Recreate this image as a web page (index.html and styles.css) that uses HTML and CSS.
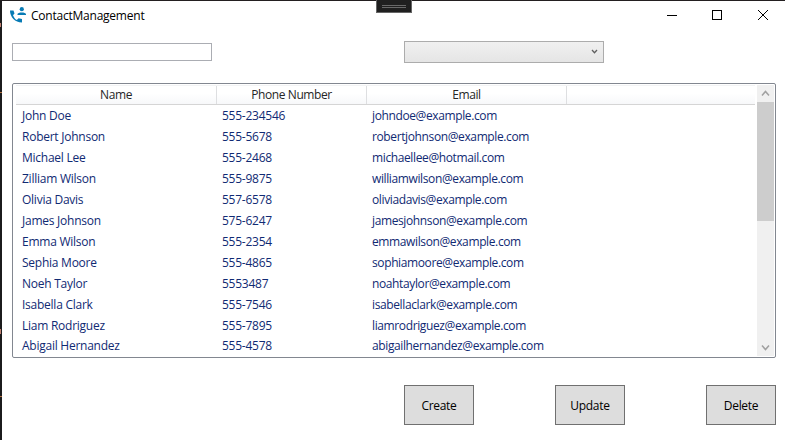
FILE: index.html
```
<!DOCTYPE html>
<html lang="en">
<head>
<meta charset="utf-8">
<title>ContactManagement</title>
<link rel="stylesheet" href="styles.css">
</head>
<body>
<div class="desktop">
<div class="edge"></div>
<main class="window">
  <header class="titlebar">
    <svg class="logo" width="18" height="18" viewBox="0 0 18 18"><path d="M1 4.500C1 11 6 16.500 13 16.500V13.100L9.600 12.300L7.800 14C6 13 4.700 11 4 9.200L5.500 7.500L4.500 4.500H1ZM8.500 9V8C8.500 5.900 17 5.900 17 8V9Z" fill="#087bb5"/><circle cx="12.800" cy="3.200" r="2.100" fill="#087bb5"/></svg>
    <span class="title">ContactManagement</span>
    <svg class="controls" width="104" height="12" viewBox="0 0 104 12" fill="none" stroke="#000"><path shape-rendering="crispEdges" d="M0 6.500H10M45.500 1.500H54.500V10.500H45.500Z"/><path d="M91 1L101 11M101 1L91 11"/></svg>
  </header>
  <div class="filters">
    <input class="search" aria-label="Search">
    <div class="combo"><svg width="7" height="6" viewBox="0 0 7 6" fill="none" stroke="#606060" stroke-width="1.300"><path d="M1 1L3.500 3.700L6 1"/></svg></div>
  </div>
  <section class="list">
    <div class="grid">
      <div class="row head"><span>Name</span><span>Phone Number</span><span>Email</span></div>
      <div class="row"><span>John Doe</span><span>555-234546</span><span>johndoe@example.com</span></div>
      <div class="row"><span>Robert Johnson</span><span>555-5678</span><span>robertjohnson@example.com</span></div>
      <div class="row"><span>Michael Lee</span><span>555-2468</span><span>michaellee@hotmail.com</span></div>
      <div class="row"><span>Zilliam Wilson</span><span>555-9875</span><span>williamwilson@example.com</span></div>
      <div class="row"><span>Olivia Davis</span><span>557-6578</span><span>oliviadavis@example.com</span></div>
      <div class="row"><span>James Johnson</span><span>575-6247</span><span>jamesjohnson@example.com</span></div>
      <div class="row"><span>Emma Wilson</span><span>555-2354</span><span>emmawilson@example.com</span></div>
      <div class="row"><span>Sephia Moore</span><span>555-4865</span><span>sophiamoore@example.com</span></div>
      <div class="row"><span>Noeh Taylor</span><span>5553487</span><span>noahtaylor@example.com</span></div>
      <div class="row"><span>Isabella Clark</span><span>555-7546</span><span>isabellaclark@example.com</span></div>
      <div class="row"><span>Liam Rodriguez</span><span>555-7895</span><span>liamrodriguez@example.com</span></div>
      <div class="row last"><span>Abigail Hernandez</span><span>555-4578</span><span>abigailhernandez@example.com</span></div>
    </div>
    <div class="scroll">
      <svg width="17" height="17" viewBox="0 0 17 17"><path d="M5 10.500L8.500 6.500L12 10.500" fill="none" stroke="#a0a0a0" stroke-width="1.500"/></svg>
      <div class="thumb"></div>
      <svg width="17" height="17" viewBox="0 0 17 17"><path d="M5 6.500L8.500 10.500L12 6.500" fill="none" stroke="#a0a0a0" stroke-width="1.500"/></svg>
    </div>
  </section>
  <footer class="actions"><button>Create</button><button>Update</button><button>Delete</button></footer>
</main>
<div class="grip"></div>
</div>
</body>
</html>
```

FILE: styles.css
```
* { box-sizing: border-box; }
body { margin: 0; overflow: hidden; font: 12px/16px "Open Sans", "Noto Sans", sans-serif; }
.desktop { position: relative; display: flex; width: 785px; height: 440px; padding-top: 1px; background: #231f20; }
.edge {
  width: 2px;
  background:
    linear-gradient(#c08070, #c08070) 0 22px / 1px 4px no-repeat,
    linear-gradient(#b07040, #b07040) 0 91px / 2px 1px no-repeat,
    linear-gradient(#c08070, #c08070) 0 328px / 1px 5px no-repeat,
    linear-gradient(#b07040, #b07040) 0 395px / 2px 1px no-repeat,
    #1b1b1c;
}
.window { width: 783px; height: 439px; padding-left: 10px; background: #fff; }
.titlebar { display: flex; height: 40px; padding: 5px 14px 0 0; }
.logo { margin-left: -3px; flex: none; }
.title { margin: 2px 0 0 4px; font-size: 12px; letter-spacing: -0.23px; color: #000; }
.controls { margin: 3px 0 0 auto; }
.filters { display: flex; height: 42px; }
.search { width: 200px; height: 18px; margin: 2px 192px 0 0; padding: 0; border: 1px solid #abadb3; }
.combo { display: flex; justify-content: flex-end; width: 200px; height: 22px; padding: 7px 5px 0 0; border: 1px solid #acacac; background: linear-gradient(#f0f0f0, #e5e5e5); }
.list { display: flex; width: 764px; height: 275px; padding: 1px; border: 1px solid #828790; border-radius: 2px; }
.grid { width: 740px; margin: 0 2px 0 1px; overflow: hidden; color: #102a73; }
.row { display: grid; grid-template-columns: 201px 150px 200px; height: 21px; line-height: 20px; letter-spacing: -0.25px; white-space: nowrap; }
.row span { padding-left: 6px; }
.row span:first-child { padding-left: 7px; }
.row span:nth-child(2) { letter-spacing: -0.24px; }
.row span:nth-child(3) { letter-spacing: -0.38px; }
.row.last { margin-top: -1px; }
.row.head { height: 20px; line-height: 18px; margin: 0 0 1px 1px; grid-template-columns: 201px 150px 200px; color: #262626; text-align: center; border-top: 1px solid #f2f3f4; border-bottom: 1px solid #d5d5d5; background: linear-gradient(#fff 40%, #f7f8fa); }
.row.head span { padding: 0; letter-spacing: -0.4px; border-right: 1px solid #dedfe1; }
.scroll { display: flex; flex-direction: column; width: 17px; margin-left: auto; background: #f0f0f0; }
.thumb { height: 119px; margin-bottom: auto; background: #cdcdcd; }
.actions { display: flex; justify-content: space-between; width: 372px; margin: 27px 0 0 392px; }
.actions button { width: 70px; height: 40px; padding: 1px 0 0; border: 1px solid #707070; background: #ddd; color: #000; font: 12px/16px "Open Sans", sans-serif; letter-spacing: -0.3px; }
.grip { position: absolute; left: 376px; top: 0; width: 36px; height: 13px; border: 1px solid #666; border-top: 0; background: linear-gradient(#686868, #686868) center 5px / 24px 1px no-repeat, linear-gradient(#686868, #686868) center 7px / 24px 1px no-repeat, #1f1f1f; }
```
